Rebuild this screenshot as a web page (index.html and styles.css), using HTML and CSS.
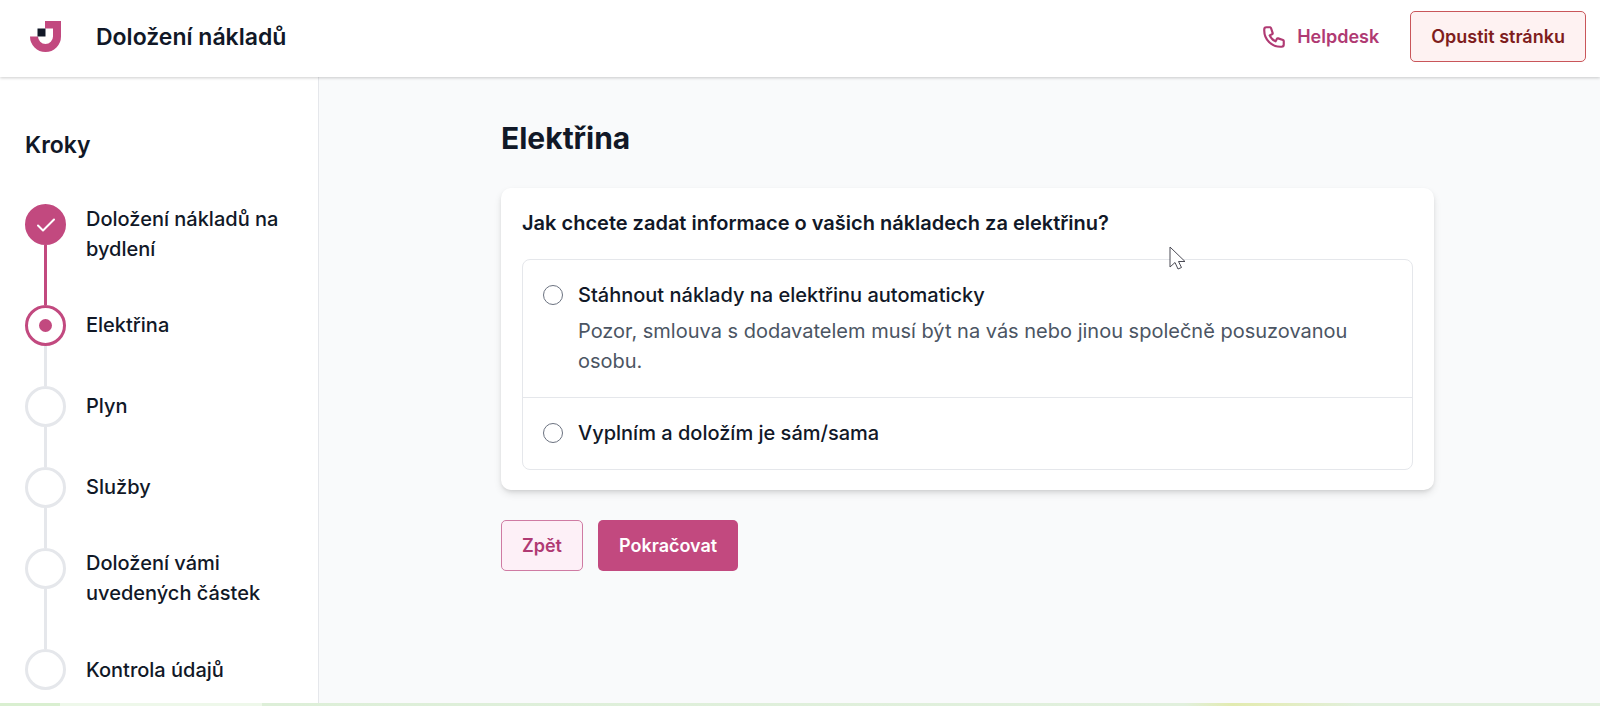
FILE: index.html
```
<!DOCTYPE html>
<html lang="cs">

<head>
  <meta charset="utf-8">
  <meta name="viewport" content="width=device-width, initial-scale=1">
  <title>Doložení nákladů</title>
  <link rel="stylesheet" href="styles.css">
</head>

<body>

  <header class="header">
    <svg class="logo" viewBox="0 0 31 31" aria-hidden="true">
      <path fill="#c2497f" d="M15 0h16v15.500a15.500 15.500 0 0 1-31 0h8a7.500 7.500 0 0 0 15 0V7.500h-8z" />
      <path fill="#111827" d="M7.500 7.500h8v8h-8z" />
    </svg>
    <span class="header-title">Doložení nákladů</span>
    <a class="helpdesk" href="#">
      <svg class="phone" viewBox="0 0 24 24" aria-hidden="true">
        <path d="M3 5a2 2 0 0 1 2-2h3.280a1 1 0 0 1 .948.684l1.498 4.493a1 1 0 0 1-.502 1.210l-2.257 1.130a11.042 11.042 0 0 0 5.516 5.516l1.130-2.257a1 1 0 0 1 1.210-.502l4.493 1.498a1 1 0 0 1 .684.949V19a2 2 0 0 1-2 2h-1C9.716 21 3 14.284 3 6V5z" />
      </svg>
      Helpdesk
    </a>
    <button type="button" class="btn btn-leave">Opustit stránku</button>
  </header>

  <div class="layout">
    <nav class="sidebar" aria-label="Kroky">
      <h2>Kroky</h2>
      <ol class="steps">
        <li class="step done">
          <div class="marker">
            <span class="circle">
              <svg class="check" viewBox="0 0 18 14" aria-hidden="true">
                <path d="M1 7.500l5 5L17 1.500" />
              </svg>
            </span>
          </div>
          <span class="step-name">Doložení nákladů na bydlení</span>
        </li>
        <li class="step current" aria-current="step">
          <div class="marker"><span class="circle"><span class="dot"></span></span></div>
          <span class="step-name">Elektřina</span>
        </li>
        <li class="step">
          <div class="marker"><span class="circle"></span></div>
          <span class="step-name">Plyn</span>
        </li>
        <li class="step">
          <div class="marker"><span class="circle"></span></div>
          <span class="step-name">Služby</span>
        </li>
        <li class="step">
          <div class="marker"><span class="circle"></span></div>
          <span class="step-name">Doložení vámi uvedených částek</span>
        </li>
        <li class="step">
          <div class="marker"><span class="circle"></span></div>
          <span class="step-name">Kontrola údajů</span>
        </li>
      </ol>
    </nav>

    <main class="main">
      <form class="content">
        <h1>Elektřina</h1>

        <div class="card" role="radiogroup" aria-labelledby="question">
          <h3 id="question">Jak chcete zadat informace o vašich nákladech za elektřinu?</h3>
          <div class="options">
            <div class="option">
              <input type="radio" id="auto" name="source" value="auto" aria-describedby="auto-note">
              <div>
                <label for="auto">Stáhnout náklady na elektřinu automaticky</label>
                <p id="auto-note">Pozor, smlouva s dodavatelem musí být na vás nebo jinou společně posuzovanou osobu.</p>
              </div>
            </div>
            <div class="option">
              <input type="radio" id="manual" name="source" value="manual">
              <label for="manual">Vyplním a doložím je sám/sama</label>
            </div>
          </div>
          <svg class="cursor" viewBox="0 0 17 24" aria-hidden="true">
            <path d="M1 1v20l5-4.500 3 6.500 3.500-1.500-3-6H16z" />
          </svg>
        </div>

        <div class="actions">
          <button type="button" class="btn btn-back">Zpět</button>
          <button type="submit" class="btn btn-next">Pokračovat</button>
        </div>
      </form>
    </main>
  </div>

  <footer class="strip"></footer>

</body>

</html>
```

FILE: styles.css
```
* {
  box-sizing: border-box;
}

body {
  font-family: Inter, sans-serif;
  font-size: 20px;
  line-height: 30px;
  color: #111827;
  background: #f9fafb;
  margin: 0;
  min-height: 100vh;
  display: flex;
  flex-direction: column;
}

h1,
h2,
h3,
p {
  margin: 0;
}

.header {
  display: flex;
  align-items: center;
  min-height: 77px;
  padding: 11px 14px 15px 30px;
  background: #fff;
  box-shadow: 0 1px 3px rgba(0, 0, 0, 0.2);
  z-index: 1;
}

.logo {
  width: 31px;
  height: 31px;
  margin-right: 35px;
}

.header-title {
  font-size: 23px;
  font-weight: 600;
}

.helpdesk {
  display: flex;
  align-items: center;
  gap: 10px;
  margin-left: auto;
  margin-right: 31px;
  font-size: 18px;
  font-weight: 600;
  color: #b03a73;
  text-decoration: none;
}

.phone {
  width: 26px;
  height: 26px;
  fill: none;
  stroke: #b03a73;
  stroke-width: 2;
  stroke-linecap: round;
  stroke-linejoin: round;
}

.btn {
  font-family: inherit;
  font-size: 18px;
  font-weight: 600;
  line-height: 25px;
  padding: 12px 20px;
  border: 1px solid transparent;
  border-radius: 5px;
  cursor: pointer;
}

.btn-leave {
  color: #7f1d1d;
  background: #fef2f2;
  border-color: #c9565a;
}

.btn-back {
  color: #b03a73;
  background: #fdf0f7;
  border-color: #cf7ba3;
}

.btn-next {
  color: #fff;
  background: #c2497f;
}

.layout {
  display: flex;
  flex: 1;
}

.sidebar {
  flex: 0 0 319px;
  padding: 53px 25px 10px;
  background: #fff;
  border-right: 1px solid #e5e7eb;
}

.sidebar h2 {
  font-size: 23px;
  font-weight: 600;
  margin-bottom: 44px;
}

.steps {
  list-style: none;
  margin: 0;
  padding: 0;
}

.step {
  display: flex;
  gap: 20px;
}

.marker {
  display: flex;
  flex-direction: column;
  align-items: center;
}

/* line to the next step */
.step:not(:last-child) .marker::after {
  content: '';
  flex: 1;
  width: 3px;
  background: #e5e7eb;
}

.step.done .marker::after {
  background: #c2497f;
}

.circle {
  display: flex;
  align-items: center;
  justify-content: center;
  width: 41px;
  height: 41px;
  border: 3px solid #e5e7eb;
  border-radius: 50%;
}

.done .circle {
  background: #c2497f;
  border-color: #c2497f;
}

.current .circle {
  border-color: #c2497f;
}

.check {
  width: 18px;
  height: 14px;
  fill: none;
  stroke: #fff;
  stroke-width: 2;
  stroke-linecap: round;
  stroke-linejoin: round;
}

.dot {
  width: 13px;
  height: 13px;
  border-radius: 50%;
  background: #c2497f;
}

.step-name {
  display: flex;
  align-items: center;
  min-height: 40px;
  margin-bottom: 41px;
  font-weight: 500;
}

.step:last-child .step-name {
  margin-bottom: 0;
}

.main {
  flex: 1;
  padding: 41px 20px 41px 36px;
}

.content {
  max-width: 933px;
  margin: 0 auto;
}

h1 {
  font-size: 30px;
  font-weight: 700;
  line-height: 40px;
  margin-bottom: 30px;
}

.card {
  position: relative;
  padding: 20px 21px;
  background: #fff;
  border-radius: 10px;
  box-shadow: 0 4px 8px -1px rgba(0, 0, 0, 0.12), 0 2px 4px -1px rgba(0, 0, 0, 0.1);
}

.card h3 {
  font-size: 20px;
  font-weight: 600;
  margin-bottom: 21px;
}

.options {
  border: 1px solid #e5e7eb;
  border-radius: 8px;
}

.option {
  display: flex;
  gap: 15px;
  padding: 20px 20px 21px;
}

.option + .option {
  border-top: 1px solid #e5e7eb;
}

.option label {
  display: block;
  font-weight: 500;
}

.option p {
  margin-top: 6px;
  color: #4b5563;
}

.option input {
  appearance: none;
  flex: none;
  width: 20px;
  height: 20px;
  margin: 5px 0 0;
  border: 1px solid #6b7280;
  border-radius: 50%;
  background: #fff;
}

.option input:checked {
  border: 6px solid #c2497f;
}

.cursor {
  position: absolute;
  top: 58px;
  right: 248px;
  width: 17px;
  height: 24px;
  fill: #fff;
  stroke: #4b4b55;
  stroke-width: 1;
}

.actions {
  display: flex;
  gap: 15px;
  margin-top: 30px;
}

.strip {
  height: 3px;
  background: linear-gradient(to right, #d9efd0 60px, #eef8ea 60px, #eef8ea 262px, #ddefd8 262px, #e1f0dd 74%, #e2ebb0 77%, #e4ecb8 79%, #e1f0dd 85%);
}
```
